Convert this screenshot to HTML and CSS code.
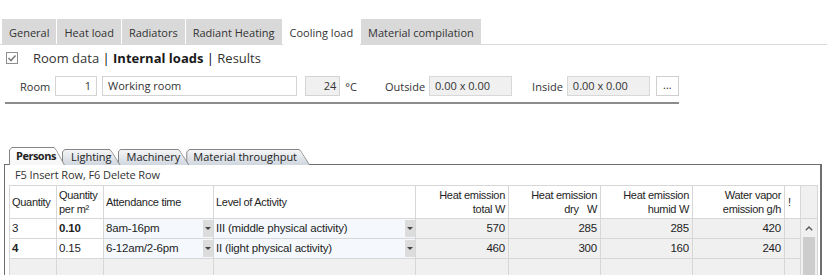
FILE: index.html
```html
<!DOCTYPE html>
<html lang="en">
<head>
  <meta charset="UTF-8" />
  <title>Cooling load - Internal loads</title>
  <link rel="stylesheet" href="styles.css">
</head>
<body>

  <div class="tabs">
    <div class="tab">General</div>
    <div class="tab">Heat load</div>
    <div class="tab">Radiators</div>
    <div class="tab">Radiant Heating</div>
    <div class="tab active">Cooling load</div>
    <div class="tab">Material compilation</div>
  </div>

  <div class="toolbar">
    <span class="check">
      <svg width="10" height="10" viewBox="0 0 10 10"><polyline points="1.5,5 4,7.5 8.5,2.5" fill="none" stroke="#7d7d7d" stroke-width="1.6"/></svg>
    </span>
    <span>Room data <span class="sep">|</span> <b>Internal loads</b> <span class="sep">|</span> Results</span>
  </div>

  <div class="room">
    <div class="room-row">
      <span class="lbl">Room</span>
      <span class="field f-no">1</span>
      <span class="field f-name">Working room</span>
      <span class="field f-temp">24</span>
      <span class="unit">°C</span>
      <span class="lbl lbl-out">Outside</span>
      <span class="field f-size">0.00 x 0.00</span>
      <span class="lbl lbl-in">Inside</span>
      <span class="field f-size">0.00 x 0.00</span>
      <button class="more">...</button>
    </div>
  </div>

  <div class="subtabs">
    <div class="subtab active"><span>Persons</span></div>
    <div class="subtab t2"><span>Lighting</span></div>
    <div class="subtab t3"><span>Machinery</span></div>
    <div class="subtab t4"><span>Material throughput</span></div>
  </div>

  <div class="panel">
    <div class="hint">F5 Insert Row, F6 Delete Row</div>
    <table class="grid">
      <colgroup>
        <col style="width:47px"><col style="width:47px"><col style="width:110px"><col style="width:202px">
        <col style="width:93px"><col style="width:92px"><col style="width:92px"><col style="width:92px">
        <col style="width:16px"><col style="width:17px">
      </colgroup>
      <tr class="head">
        <th>Quantity</th>
        <th class="two">Quantity<br>per m²</th>
        <th>Attendance time</th>
        <th>Level of Activity</th>
        <th class="r">Heat emission<br>total W</th>
        <th class="r">Heat emission<br>dry&nbsp;&nbsp;&nbsp;W</th>
        <th class="r">Heat emission<br>humid W</th>
        <th class="r">Water vapor<br>emission g/h</th>
        <th class="bang">!</th>
        <th class="sb-head"></th>
      </tr>
      <tr>
        <td class="edit">3</td>
        <td class="edit"><b>0.10</b></td>
        <td class="pick"><div class="pick-in"><span>8am-16pm</span><i class="arrow"></i></div></td>
        <td class="pick"><div class="pick-in"><span>III (middle physical activity)</span><i class="arrow"></i></div></td>
        <td class="r">570</td>
        <td class="r">285</td>
        <td class="r">285</td>
        <td class="r">420</td>
        <td></td>
        <td class="scroll" rowspan="4">
          <div class="up"><svg width="8" height="5" viewBox="0 0 8 5"><polyline points="0.8,4.2 4,1 7.2,4.2" fill="none" stroke="#5a5a5a" stroke-width="1.4"/></svg></div>
          <div class="thumb"></div>
        </td>
      </tr>
      <tr>
        <td class="edit"><b>4</b></td>
        <td class="edit">0.15</td>
        <td class="pick"><div class="pick-in"><span>6-12am/2-6pm</span><i class="arrow"></i></div></td>
        <td class="pick"><div class="pick-in"><span>II (light physical activity)</span><i class="arrow"></i></div></td>
        <td class="r">460</td>
        <td class="r">300</td>
        <td class="r">160</td>
        <td class="r">240</td>
        <td></td>
      </tr>
      <tr>
        <td></td><td></td><td></td><td></td><td></td><td></td><td></td><td></td><td></td>
      </tr>
      <tr>
        <td></td><td></td><td></td><td></td><td></td><td></td><td></td><td></td><td></td>
      </tr>
    </table>
  </div>

</body>
</html>
```

FILE: styles.css
```css
* { box-sizing: border-box; }
html, body {
  margin: 0;
  width: 827px; height: 275px;
  overflow: hidden;
  background: #fff;
  color: #222;
  font-family: 'Open Sans', 'Noto Sans', sans-serif;
}

/* main tabs */
.tabs {
  display: flex;
  align-items: flex-start;
  gap: 1px;
  margin-top: 19px;
  padding-left: 2px;
  height: 26px;
  border-bottom: 1px solid #dadada;
}
.tab {
  height: 25px;
  padding: 3px 7px 0;
  line-height: 22px;
  font-size: 11px;
  color: #333;
  background: #d9d9d9;
}
.tab.active {
  background: #fff;
  margin-top: 3px;
  height: 23px;
  padding-top: 0;
}

/* breadcrumb row */
.toolbar {
  display: flex;
  align-items: center;
  height: 26px;
  padding-left: 6px;
  font-size: 13px;
  color: #333;
}
.toolbar b { color: #1a1a1a; }
.sep { color: #000; }
.check {
  display: flex;
  width: 12px; height: 12px;
  border: 1px solid #8e8e8e;
  margin-right: 15px;
  background: #fff;
}

/* room fields */
.room {
  width: 674px;
  margin: 5px 0 0 5px;
  padding: 0 0 6px 15px;
  border-bottom: 2px solid #8c8c8c;
}
.room-row {
  display: flex;
  align-items: center;
  height: 20px;
  font-size: 11px;
  color: #333;
}
.field {
  height: 20px;
  padding: 0 5px;
  line-height: 18px;
  font-size: 11px;
  border: 1px solid #d4d4d4;
  background: #fff;
  white-space: nowrap;
}
.f-no { width: 43px; margin-left: 5px; text-align: right; }
.f-name { width: 203px; margin-left: 5px; }
.f-temp { width: 36px; margin-left: 8px; text-align: right; background: #f0f0f0; padding-right: 3px; }
.unit { margin-left: 5px; }
.lbl-out { margin-left: 28px; }
.lbl-in { margin-left: 20px; }
.f-size { width: 86px; margin-left: 4px; background: #f0f0f0; border-color: #d8d8d8; }
.more {
  width: 24px; height: 20px;
  margin-left: 6px;
  padding: 0 0 4px;
  border: 1px solid #cfcfcf;
  background: #fff;
  color: #333;
  font: 11px 'Open Sans', sans-serif;
}

/* sub tabs */
.subtabs {
  display: flex;
  align-items: flex-end;
  height: 18px;
  margin: 43px 0 0 9px;
  position: relative;
  z-index: 2;
  font-size: 11px;
}
.subtab {
  position: relative;
  height: 16px;
  margin-right: -3px;
  padding: 1px 0 0 1px;
  background: #858585;
  clip-path: polygon(0 3px, 3px 0, calc(100% - 11px) 0, calc(100% - 9px) 2px, 100% 100%, 0 100%);
}
.subtab span {
  display: block;
  height: 100%;
  padding: 0 9px 0 8px;
  line-height: 14px;
  color: #222;
  background: linear-gradient(#f4f5f7, #d0d7df);
  clip-path: polygon(0 2px, 2px 0, calc(100% - 11px) 0, calc(100% - 9px) 2px, calc(100% - 1px) 100%, 0 100%);
}
.subtab.active { height: 18px; z-index: 4; }
.subtab.active span {
  padding-left: 6px;
  line-height: 16px;
  font-weight: bold;
  letter-spacing: -0.5px;
  background: linear-gradient(#ffffff, #f6f6f6);
}
.t2 { z-index: 3; }
.t3 { z-index: 2; }
.t4 { z-index: 1; }
.t4 span { padding-left: 6px; padding-right: 13px; }

/* panel */
.panel {
  width: 818px;
  height: 120px;
  margin: -1px 0 0 4px;
  border: 1px solid #6e6e6e;
  border-bottom: none;
  border-right-width: 2px;
}
.hint {
  height: 20px;
  padding-left: 10px;
  line-height: 20px;
  font-size: 11px;
  letter-spacing: -0.1px;
  color: #333;
}

/* data grid */
.grid {
  margin-left: 4px;
  width: 808px;
  border-collapse: collapse;
  table-layout: fixed;
  font-family: 'Liberation Sans', Arial, sans-serif;
  font-size: 11px;
  letter-spacing: -0.3px;
  color: #1e1e1e;
}
.grid th, .grid td {
  border: 1px solid #d7d7d7;
  padding: 0 3px 0 2px;
  white-space: nowrap;
  overflow: hidden;
}
.grid th {
  height: 33px;
  font-weight: normal;
  text-align: left;
  line-height: 14px;
  background: #fff;
}
.grid th.r, .grid td.r { text-align: right; }
.grid th.bang { padding-left: 3px; }
.grid th.sb-head { background: #f0f0f0; }
.grid tr { height: 18px; }
.grid td {
  height: 18px;
  line-height: 16px;
  font-size: 11.5px;
  letter-spacing: -0.2px;
  background: #f0f0f0;
}
.grid td.edit { background: #fff; }
.grid td.pick { padding: 0; background: #f5f9fd; }
.pick-in {
  display: flex;
  height: 17px;
  align-items: center;
}
.pick-in span { flex: 1; padding-left: 2px; overflow: hidden; }
.pick-in .arrow {
  position: relative;
  align-self: stretch;
  width: 10px;
  background: #dcdcdc;
}
.pick-in .arrow::after {
  content: '';
  position: absolute;
  left: 2px; top: 7px;
  border-left: 3px solid transparent;
  border-right: 3px solid transparent;
  border-top: 3px solid #444;
}
.grid td.scroll {
  padding: 0;
  vertical-align: top;
  background: #f0f0f0;
}
.up {
  display: flex;
  justify-content: center;
  align-items: center;
  height: 18px;
}
.thumb {
  height: 60px;
  margin: 0 2px;
  background: #cdcdcd;
}
```
